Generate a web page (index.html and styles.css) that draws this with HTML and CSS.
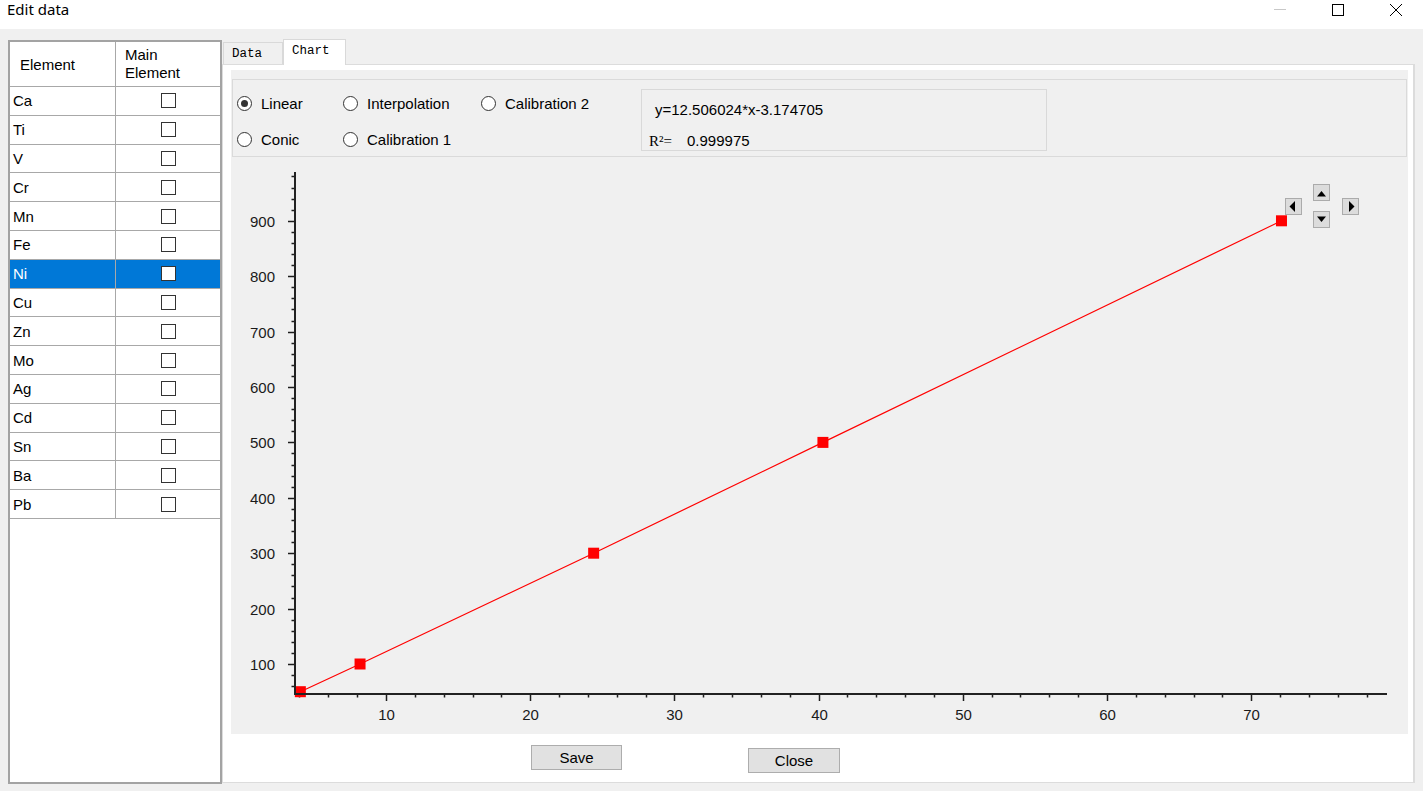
FILE: index.html
```html
<!DOCTYPE html>
<html>
<head>
    <meta charset="UTF-8">
    <title>Edit data</title>
    <link rel="stylesheet" href="styles.css">
</head>
<body>
    <div class="titlebar">
        <span class="title">Edit data</span>
        <div class="winctl">
            <span><svg width="12" height="12"><line x1="0" y1="5.5" x2="12" y2="5.5" stroke="#c8c8c8" stroke-width="1"/></svg></span>
            <span><svg width="12" height="12"><rect x="0.5" y="0.5" width="11" height="11" fill="none" stroke="#000" stroke-width="1"/></svg></span>
            <span><svg width="12" height="12"><path d="M0 0L12 12M12 0L0 12" stroke="#000" stroke-width="1"/></svg></span>
        </div>
    </div>

    <div class="main">
        <div class="elements">
            <div class="row head">
                <div class="c1">Element</div>
                <div class="c2">Main<br>Element</div>
            </div>
            <div class="row"><div class="c1">Ca</div><div class="c2"><span class="check"></span></div></div>
            <div class="row"><div class="c1">Ti</div><div class="c2"><span class="check"></span></div></div>
            <div class="row"><div class="c1">V</div><div class="c2"><span class="check"></span></div></div>
            <div class="row"><div class="c1">Cr</div><div class="c2"><span class="check"></span></div></div>
            <div class="row"><div class="c1">Mn</div><div class="c2"><span class="check"></span></div></div>
            <div class="row"><div class="c1">Fe</div><div class="c2"><span class="check"></span></div></div>
            <div class="row sel"><div class="c1">Ni</div><div class="c2"><span class="check"></span></div></div>
            <div class="row"><div class="c1">Cu</div><div class="c2"><span class="check"></span></div></div>
            <div class="row"><div class="c1">Zn</div><div class="c2"><span class="check"></span></div></div>
            <div class="row"><div class="c1">Mo</div><div class="c2"><span class="check"></span></div></div>
            <div class="row"><div class="c1">Ag</div><div class="c2"><span class="check"></span></div></div>
            <div class="row"><div class="c1">Cd</div><div class="c2"><span class="check"></span></div></div>
            <div class="row"><div class="c1">Sn</div><div class="c2"><span class="check"></span></div></div>
            <div class="row"><div class="c1">Ba</div><div class="c2"><span class="check"></span></div></div>
            <div class="row"><div class="c1">Pb</div><div class="c2"><span class="check"></span></div></div>
        </div>

        <div class="tabs-area">
            <div class="tabbar">
                <div class="tab">Data</div>
                <div class="tab active">Chart</div>
            </div>
            <div class="tabpanel">
                <div class="chartarea">
                    <div class="options">
                        <div class="radios">
                            <label class="opt"><span class="radio on"></span>Linear</label>
                            <label class="opt"><span class="radio"></span>Interpolation</label>
                            <label class="opt"><span class="radio"></span>Calibration 2</label>
                            <label class="opt"><span class="radio"></span>Conic</label>
                            <label class="opt"><span class="radio"></span>Calibration 1</label>
                        </div>
                        <div class="formula">
                            <div class="eq">y=12.506024*x-3.174705</div>
                            <div class="r2line"><span class="r2">R²=</span><span>0.999975</span></div>
                        </div>
                    </div>

                    <svg class="plot" id="plot" viewBox="231 157 1177 577">
                        <g id="ticks" stroke="#1e1e1e" stroke-width="1.5"></g>
                        <g id="labels" font-family="Liberation Sans, Arial, sans-serif" font-size="15" fill="#1a1a1a"></g>
                        <polyline id="curve" fill="none" stroke="#ff0000" stroke-width="1.2"/>
                        <g id="points" fill="#ff0000"></g>
                        <line x1="295" y1="172" x2="295" y2="694.5" stroke="#222" stroke-width="2"/>
                        <line x1="294" y1="694" x2="1387" y2="694" stroke="#222" stroke-width="2"/>

                        <!-- pan buttons -->
                        <g fill="#dcdcdc" stroke="#ababab" stroke-width="1">
                            <rect x="1285.5" y="198.5" width="16" height="16"/>
                            <rect x="1313.5" y="184.5" width="16" height="16"/>
                            <rect x="1313.5" y="211.5" width="16" height="16"/>
                            <rect x="1342.5" y="198.5" width="16" height="16"/>
                        </g>
                        <g fill="#000">
                            <polygon points="1289.5,206.5 1295,201 1295,212"/>
                            <polygon points="1317,196.5 1326,196.5 1321.5,191"/>
                            <polygon points="1317,216.5 1326,216.5 1321.5,222"/>
                            <polygon points="1349,201 1354.5,206.5 1349,212"/>
                        </g>
                    </svg>
                </div>
                <div class="actions">
                    <button class="btn save">Save</button>
                    <button class="btn close">Close</button>
                </div>
            </div>
        </div>
    </div>

    <script>
        const NS = 'http://www.w3.org/2000/svg';
        const ticks = document.getElementById('ticks');
        const labels = document.getElementById('labels');

        // pixel mapping of the plot axes
        const px = v => 241.8 + v * 14.42;
        const py = v => 719.4 - v * 0.554;

        function add(parent, tag, attrs, text) {
            const el = document.createElementNS(NS, tag);
            for (const k in attrs) el.setAttribute(k, attrs[k]);
            if (text !== undefined) el.textContent = text;
            parent.appendChild(el);
            return el;
        }

        // y axis ticks every 20, labels every 100
        for (let v = 60; v <= 980; v += 20) {
            const y = Math.round(py(v)) + 0.5;
            const major = v % 100 === 0;
            add(ticks, 'line', { x1: major ? 288 : 291.5, y1: y, x2: 295, y2: y });
            if (major) add(labels, 'text', { x: 275, y: y + 5, 'text-anchor': 'end' }, v);
        }

        // x axis ticks every 2, labels every 10
        for (let v = 4; v <= 78; v += 2) {
            const x = Math.round(px(v)) + 0.5;
            const major = v % 10 === 0;
            add(ticks, 'line', { x1: x, y1: 694, x2: x, y2: major ? 701 : 697.5 });
            if (major) add(labels, 'text', { x: x, y: 720, 'text-anchor': 'middle' }, v);
        }

        // calibration points
        const data = [[4.06, 50], [8.2, 100], [24.4, 300], [40.3, 500], [72.1, 900]];
        const pts = document.getElementById('points');
        document.getElementById('curve').setAttribute('points',
            data.map(d => px(d[0]) + ',' + py(d[1])).join(' '));
        data.forEach(d => {
            add(pts, 'rect', { x: px(d[0]) - 5.5, y: py(d[1]) - 5.5, width: 11, height: 11 });
        });
    </script>
</body>
</html>
```

FILE: styles.css
```css
* {
    box-sizing: border-box;
}

body {
    margin: 0;
    width: 1423px;
    height: 791px;
    overflow: hidden;
    background: #f0f0f0;
    font-family: "Liberation Sans", Arial, sans-serif;
    font-size: 15px;
    color: #000;
}

/* window title */
.titlebar {
    height: 29px;
    background: #fff;
    display: flex;
}

.title {
    font-family: "Noto Sans", "Liberation Sans", sans-serif;
    font-size: 15px;
    line-height: 18px;
    padding-left: 7px;
}

.winctl {
    margin-left: auto;
    margin-right: -2px;
    display: flex;
}

.winctl span {
    width: 58px;
    height: 29px;
    display: flex;
    justify-content: center;
    padding-top: 4px;
}

.main {
    display: flex;
    height: 762px;
    padding: 11px 8px 0 8px;
}

/* element list */
.elements {
    width: 214px;
    height: 744px;
    border: 2px solid #a3a3a3;
    background: #fff;
}

.row {
    display: grid;
    grid-template-columns: 106px 1fr;
    height: 28.8px;
    border-bottom: 1px solid #a8a8a8;
}

.row .c1 {
    border-right: 1px solid #a8a8a8;
    padding-left: 3px;
    display: flex;
    align-items: center;
}

.row .c2 {
    display: flex;
    align-items: center;
    justify-content: center;
}

.row.head {
    height: 45px;
}

.row.head .c1 {
    padding-left: 10px;
}

.row.head .c2 {
    justify-content: flex-start;
    padding-left: 9px;
    line-height: 18px;
}

.row.sel {
    background: #0078d7;
    color: #fff;
}

.check {
    width: 15px;
    height: 15px;
    border: 1px solid #333;
    background: #fff;
}

/* tabs */
.tabs-area {
    flex: 1;
    display: flex;
    flex-direction: column;
    margin-top: -1px;
}

.tabbar {
    height: 25px;
    display: flex;
    align-items: flex-end;
}

.tab {
    width: 60px;
    height: 22px;
    margin-left: 1px;
    padding: 1px 0 0 8px;
    border: 1px solid #d9d9d9;
    border-bottom: none;
    background: #f0f0f0;
    font-family: "Liberation Mono", monospace;
    font-size: 12.5px;
    line-height: 20px;
}

.tab.active {
    width: 63px;
    height: 26px;
    margin-left: 0;
    margin-bottom: -1px;
    background: #fff;
    position: relative;
    z-index: 1;
}

.tabpanel {
    height: 719px;
    border: 1px solid #dcdcdc;
    border-right-width: 2px;
    background: #fff;
    padding: 5px 5px 0 8px;
}

.chartarea {
    height: 664px;
    background: #f0f0f0;
    padding-top: 9px;
}

/* fit type selection */
.options {
    display: flex;
    height: 78px;
    margin: 0 1px;
    border: 1px solid #dadada;
}

.radios {
    width: 408px;
    display: grid;
    grid-template-columns: 106px 138px 1fr;
    grid-template-rows: 37px 34px;
    padding: 5px 0 0 4px;
}

.opt {
    display: flex;
    align-items: center;
    gap: 9px;
}

.radio {
    width: 15px;
    height: 15px;
    border: 1px solid #333;
    border-radius: 50%;
    background: #fff;
    display: flex;
    align-items: center;
    justify-content: center;
}

.radio.on::after {
    content: "";
    width: 7px;
    height: 7px;
    border-radius: 50%;
    background: #333;
}

.formula {
    width: 406px;
    height: 62px;
    margin-top: 9px;
    border: 1px solid #d9d9d9;
    padding: 11px 0 0 13px;
}

.eq {
    line-height: 18px;
}

.r2line {
    display: flex;
    margin: 13px 0 0 -6px;
    line-height: 18px;
}

.r2 {
    width: 38px;
    font-family: "Liberation Serif", serif;
    font-size: 15px;
}

.plot {
    display: block;
    width: 1177px;
    height: 577px;
}

/* bottom buttons */
.actions {
    display: flex;
    align-items: flex-start;
    margin-top: 11px;
    padding-left: 300px;
}

.btn {
    height: 25px;
    padding: 0;
    border: 1px solid #adadad;
    background: #e1e1e1;
    font-family: "Liberation Sans", Arial, sans-serif;
    font-size: 15px;
    color: #000;
}

.btn.save {
    width: 91px;
}

.btn.close {
    width: 92px;
    margin-left: 126px;
    margin-top: 3px;
}
```
